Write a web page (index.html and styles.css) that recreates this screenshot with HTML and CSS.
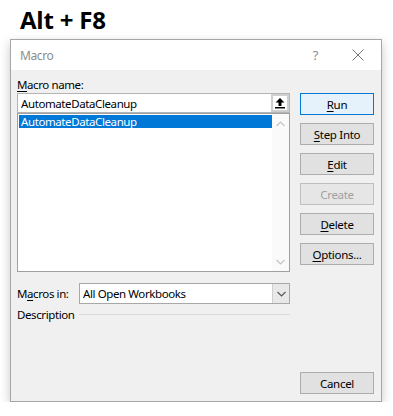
FILE: index.html
```html
<!DOCTYPE html>
<html lang="en">
<head>
<meta charset="UTF-8">
<meta name="viewport" content="width=device-width, initial-scale=1.0">
<title>Macro</title>
<link rel="stylesheet" href="styles.css">
</head>
<body>
<h1 class="shortcut">Alt + F8</h1>
<div class="dialog">
  <div class="titlebar">
    <span class="title">Macro</span>
    <span class="help">?</span>
    <svg class="close" width="12" height="12" viewBox="0 0 12 12"><path d="M0.5 0.5 L11.5 11.5 M11.5 0.5 L0.5 11.5" stroke="#777" stroke-width="1" fill="none"/></svg>
  </div>
  <div class="content">
    <div class="left">
      <label class="label"><u>M</u>acro name:</label>
      <div class="name-box">
        <span class="name-text">AutomateDataCleanup</span>
        <span class="pick">
          <svg width="12" height="12" viewBox="0 0 12 12"><path d="M6 1 L10.5 5.5 L7.5 5.5 L7.5 9 L4.5 9 L4.5 5.5 L1.5 5.5 Z" fill="#000"/><rect x="1" y="10" width="10" height="1.5" fill="#000"/></svg>
        </span>
      </div>
      <div class="list">
        <div class="items">
          <div class="item selected">AutomateDataCleanup</div>
        </div>
        <div class="scroll">
          <svg width="9" height="6" viewBox="0 0 9 6"><path d="M0.5 5 L4.5 1 L8.5 5" stroke="#c4c4c4" stroke-width="1.2" fill="none"/></svg>
          <svg width="9" height="6" viewBox="0 0 9 6"><path d="M0.5 1 L4.5 5 L8.5 1" stroke="#c4c4c4" stroke-width="1.2" fill="none"/></svg>
        </div>
      </div>
      <div class="macros-in">
        <span class="label">M<u>a</u>cros in:</span>
        <div class="select">
          <span class="select-text">All Open Workbooks</span>
          <span class="drop">
            <svg width="9" height="6" viewBox="0 0 9 6"><path d="M0.5 1 L4.5 5 L8.5 1" stroke="#555" stroke-width="1.1" fill="none"/></svg>
          </span>
        </div>
      </div>
      <div class="description">
        <span class="label">Description</span>
        <span class="rule"></span>
      </div>
    </div>
    <div class="right">
      <button class="btn default"><u>R</u>un</button>
      <button class="btn"><u>S</u>tep Into</button>
      <button class="btn"><u>E</u>dit</button>
      <button class="btn disabled">Create</button>
      <button class="btn"><u>D</u>elete</button>
      <button class="btn"><u>O</u>ptions...</button>
      <button class="btn cancel">Cancel</button>
    </div>
  </div>
</div>
</body>
</html>
```

FILE: styles.css
```css
body {
  margin: 0;
  background: #fff;
  font-family: 'Noto Sans', 'Open Sans', sans-serif;
  font-size: 11.5px;
  letter-spacing: -0.4px;
  color: #000;
}
u {
  text-decoration: underline;
  text-underline-offset: 2px;
}
.shortcut {
  margin: 0;
  padding: 5px 0 0 20px;
  height: 35px;
  box-sizing: border-box;
  font-family: 'Open Sans', sans-serif;
  font-weight: 700;
  font-size: 24px;
  line-height: 30px;
  letter-spacing: -0.2px;
}
.dialog {
  margin: 4px 0 0 10px;
  width: 372px;
  height: 363px;
  box-sizing: border-box;
  border: 1px solid #a6a6a6;
  background: #f0f0f0;
  box-shadow: 0 4px 10px rgba(0, 0, 0, 0.22);
  display: flex;
  flex-direction: column;
}
.titlebar {
  height: 30px;
  background: #fff;
  display: flex;
  align-items: center;
  padding-left: 9px;
}
.title {
  color: #8c8c8c;
  flex: 1;
  font-size: 12px;
}
.help {
  color: #8c8c8c;
  font-size: 13px;
  margin-right: 34px;
}
.close {
  margin-right: 17px;
}
.content {
  flex: 1;
  display: flex;
  padding: 6px 7px 7px 6px;
}
.left {
  width: 273px;
  display: flex;
  flex-direction: column;
}
.label {
  line-height: 17px;
  display: block;
}
.name-box {
  height: 20px;
  box-sizing: border-box;
  border: 1px solid #b4b4b4;
  background: #fff;
  display: flex;
  align-items: center;
  padding-left: 3px;
}
.name-text {
  flex: 1;
}
.pick {
  width: 18px;
  height: 18px;
  box-sizing: border-box;
  border: 2px solid #cfcfcf;
  display: flex;
  align-items: center;
  justify-content: center;
  background: #fff;
}
.list {
  height: 159px;
  box-sizing: border-box;
  border: 1px solid #a0a0a0;
  background: #fff;
  display: flex;
}
.items {
  flex: 1;
  padding: 1px 0 0 1px;
}
.item {
  line-height: 13px;
  padding-left: 2px;
}
.selected {
  background: #0078d7;
  color: #fff;
}
.scroll {
  width: 17px;
  display: flex;
  flex-direction: column;
  justify-content: space-between;
  align-items: center;
  padding: 7px 0 6px;
  background: #fafafa;
}
.macros-in {
  display: flex;
  align-items: center;
  margin-top: 11px;
}
.macros-in .label {
  width: 62px;
}
.select {
  flex: 1;
  height: 21px;
  box-sizing: border-box;
  border: 1px solid #a8a8a8;
  background: #fff;
  display: flex;
  align-items: center;
  padding-left: 3px;
}
.select-text {
  flex: 1;
}
.drop {
  width: 16px;
  height: 19px;
  background: #e8e8e8;
  border-left: 1px solid #cfcfcf;
  display: flex;
  align-items: center;
  justify-content: center;
}
.description {
  display: flex;
  align-items: center;
  margin-top: 2px;
}
.rule {
  flex: 1;
  height: 1px;
  background: #d9d9d9;
  margin-left: 5px;
}
.right {
  margin-left: 10px;
  padding-top: 17px;
  display: flex;
  flex-direction: column;
  gap: 8px;
}
.btn {
  width: 74px;
  height: 22px;
  box-sizing: border-box;
  border: 1px solid #adadad;
  background: #e1e1e1;
  font-family: inherit;
  font-size: 11.5px;
  letter-spacing: -0.3px;
  color: #000;
  padding: 0;
}
.btn.default {
  background: #e5f1fb;
  border-color: #0078d7;
}
.btn.disabled {
  color: #a0a0a0;
  border-color: #bfbfbf;
  background: #e6e6e6;
}
.btn.cancel {
  margin-top: auto;
}
```
